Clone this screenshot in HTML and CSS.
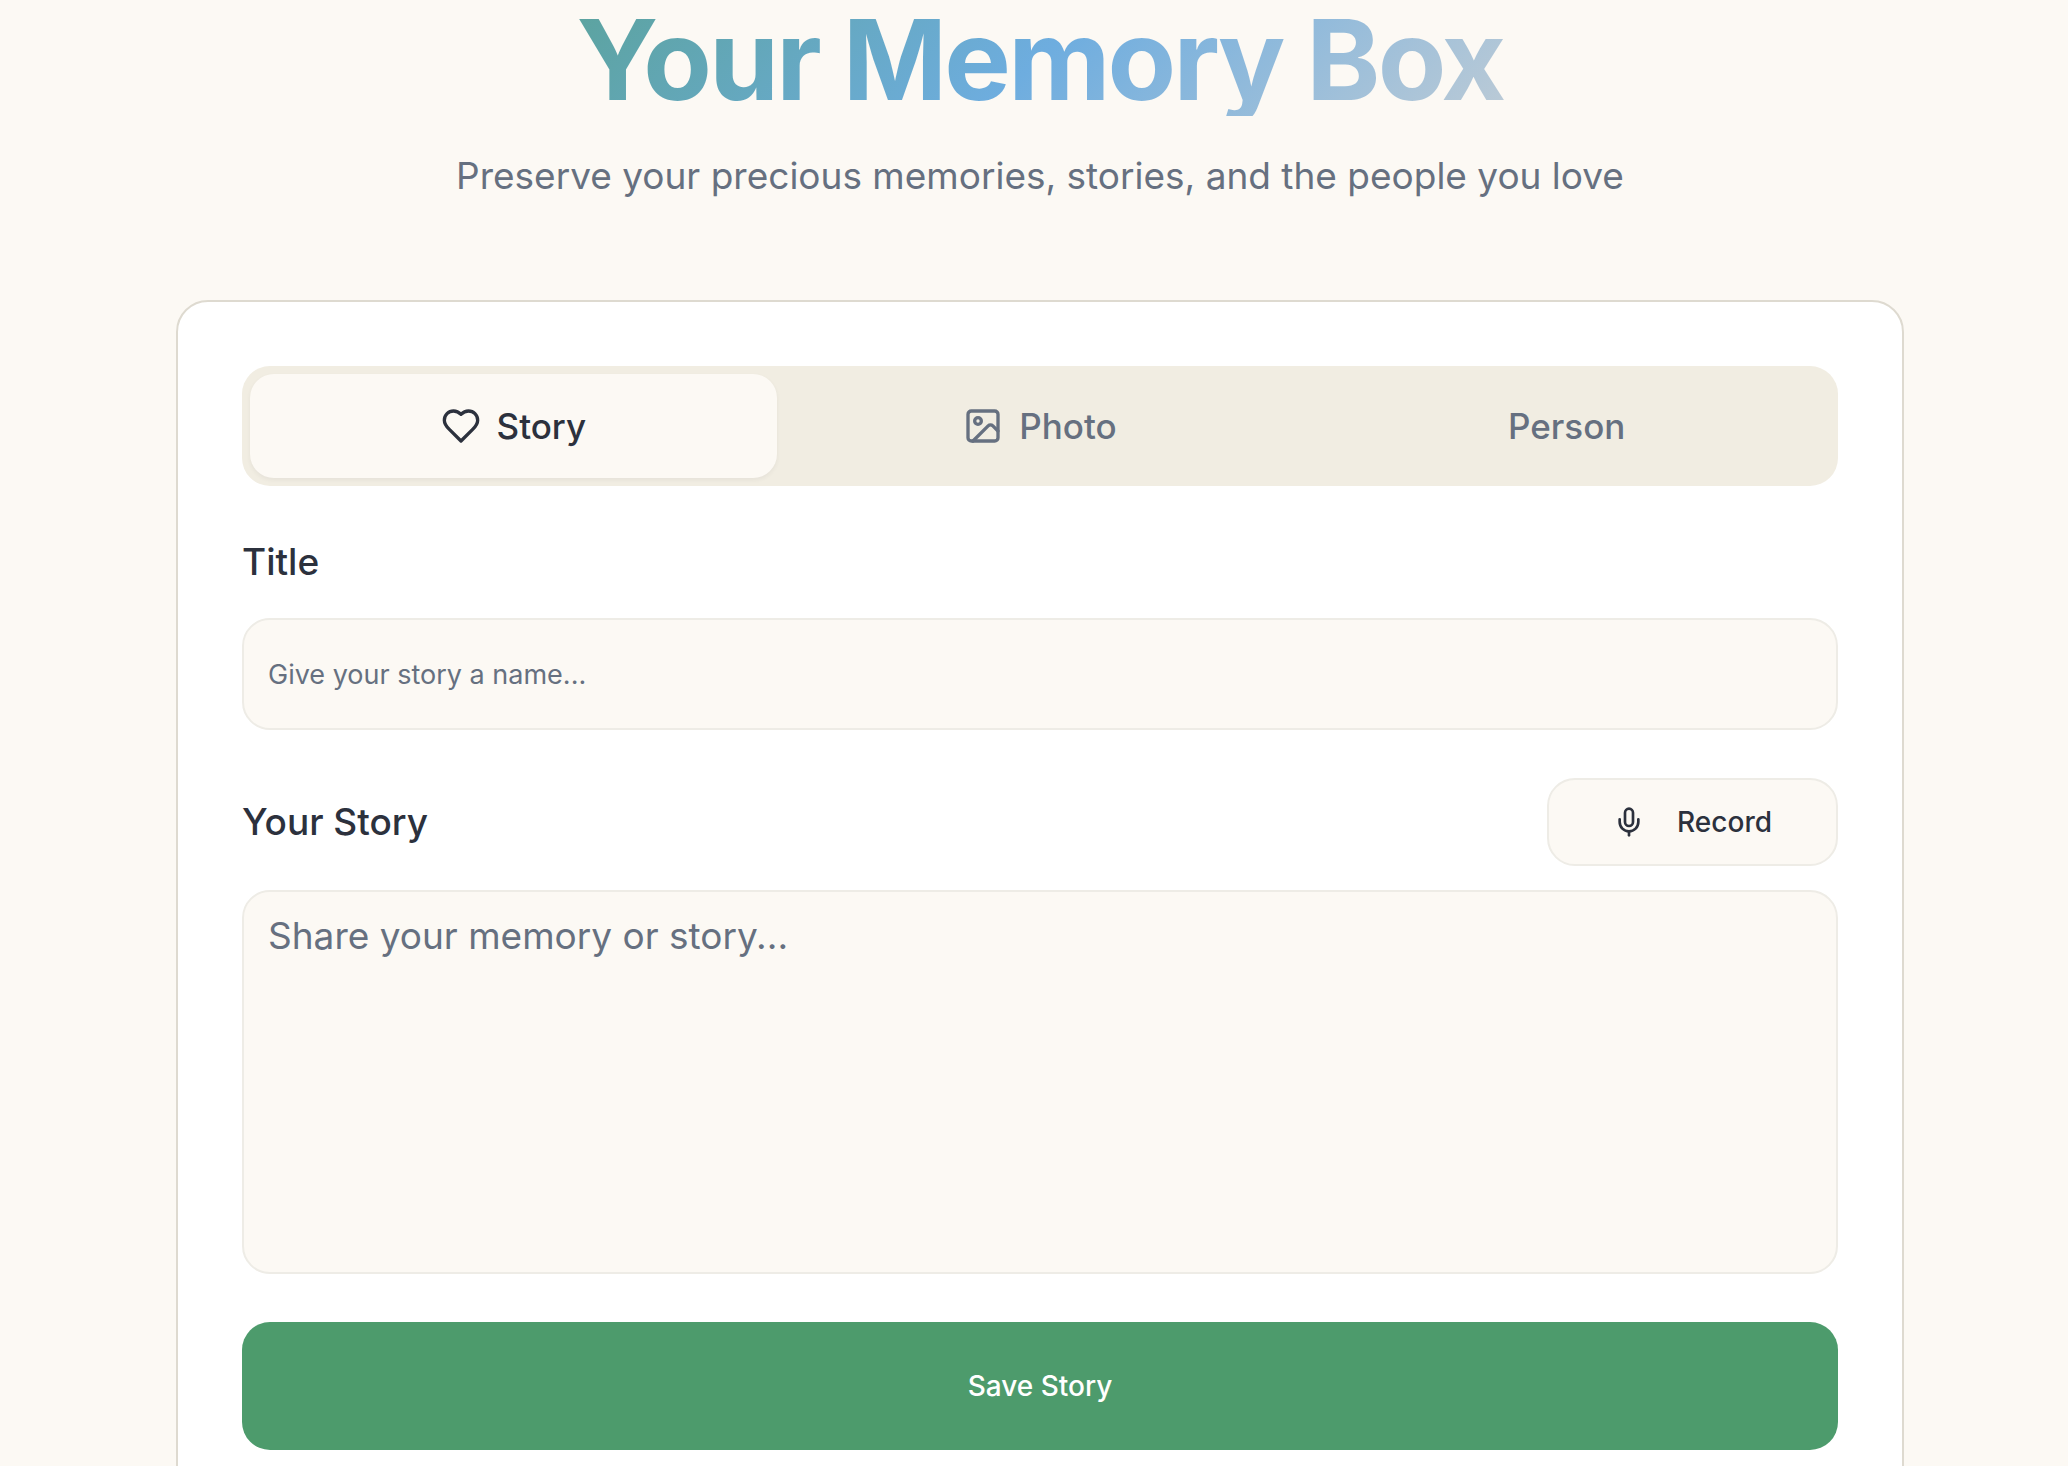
FILE: index.html
```html
<!DOCTYPE html>
<html lang="en">
<head>
<meta charset="utf-8">
<meta name="viewport" content="width=device-width, initial-scale=1">
<title>Your Memory Box</title>
<link rel="stylesheet" href="styles.css">
</head>
<body>
<main class="page">
  <header class="hero">
    <h1 class="hero-title">Your Memory Box</h1>
    <p class="hero-text">Preserve your precious memories, stories, and the people you love</p>
  </header>

  <section class="card">
    <div class="tabs" role="tablist">
      <button class="tab tab-active" type="button" role="tab" aria-selected="true">
        <svg class="icon" viewBox="0 0 24 24" aria-hidden="true"><path d="M19 14c1.49-1.46 3-3.21 3-5.5A5.5 5.5 0 0 0 16.5 3c-1.76 0-3 .5-4.5 2-1.5-1.5-2.74-2-4.5-2A5.5 5.5 0 0 0 2 8.5c0 2.3 1.5 4.05 3 5.5l7 7Z"/></svg>
        Story
      </button>
      <button class="tab" type="button" role="tab" aria-selected="false">
        <svg class="icon" viewBox="0 0 24 24" aria-hidden="true"><rect x="3" y="3" width="18" height="18" rx="2"/><circle cx="9" cy="9" r="2"/><path d="m21 15-3.086-3.086a2 2 0 0 0-2.828 0L6 21"/></svg>
        Photo
      </button>
      <button class="tab" type="button" role="tab" aria-selected="false">Person</button>
    </div>

    <form class="form">
      <div class="field field-title">
        <label class="label" for="title">Title</label>
        <input class="control" id="title" type="text" placeholder="Give your story a name...">
      </div>

      <div class="field">
        <div class="field-head">
          <label class="label" for="story">Your Story</label>
          <button class="record" type="button">
            <svg class="icon icon-small" viewBox="0 0 24 24" aria-hidden="true"><path d="M12 19v3"/><path d="M19 10v2a7 7 0 0 1-14 0v-2"/><rect x="9" y="2" width="6" height="13" rx="3"/></svg>
            Record
          </button>
        </div>
        <textarea class="control control-area" id="story" placeholder="Share your memory or story..."></textarea>
      </div>

      <button class="save" type="submit">Save Story</button>
    </form>
  </section>
</main>
</body>
</html>
```

FILE: styles.css
```css
:root {
  --paper: #fcf9f4;
  --sand: #f1ede2;
  --ink: #2c313d;
  --muted: #667080;
  --green: #4d9b6c;
  --line: #dedad0;
  --line-soft: #eeece6;
  scrollbar-width: none;
}

* {
  box-sizing: border-box;
}

body {
  margin: 0;
  background: var(--paper);
  color: var(--ink);
  font-family: Inter, "Liberation Sans", sans-serif;
}

button,
input,
textarea {
  margin: 0;
  color: inherit;
  font-family: inherit;
}

.page {
  padding: 0 164px 64px 176px;
}

.hero {
  margin-bottom: 96px;
  text-align: center;
}

.hero-title {
  margin: 0 0 32px;
  padding-top: 2px;
  background: linear-gradient(135deg, #4d9b6c, #6eaddf, #f7e1cf);
  background-clip: text;
  -webkit-background-clip: text;
  color: transparent;
  font-size: 112px;
  font-weight: 700;
  line-height: 114px;
  letter-spacing: -0.025em;
}

.hero-text {
  margin: 0;
  color: var(--muted);
  font-size: 37px;
  line-height: 56px;
}

.card {
  padding: 64px;
  border: 2px solid var(--line);
  border-radius: 32px;
  background: #fff;
}

.tabs {
  display: grid;
  grid-template-columns: repeat(3, 1fr);
  margin-bottom: 48px;
  padding: 8px;
  border-radius: 28px;
  background: var(--sand);
}

.tab {
  display: flex;
  align-items: center;
  justify-content: center;
  gap: 16px;
  height: 104px;
  padding: 0;
  border: 0;
  border-radius: 24px;
  background: none;
  color: var(--muted);
  font-size: 35px;
  font-weight: 500;
}

.tab-active {
  background: var(--paper);
  box-shadow: 0 2px 4px rgb(44 49 61 / 6%);
  color: var(--ink);
}

.icon {
  width: 40px;
  height: 40px;
  fill: none;
  stroke: currentColor;
  stroke-width: 2;
  stroke-linecap: round;
  stroke-linejoin: round;
}

.icon-small {
  width: 32px;
  height: 32px;
}

.form {
  display: flex;
  flex-direction: column;
  gap: 48px;
}

.field {
  display: flex;
  flex-direction: column;
  gap: 24px;
}

.field-title {
  gap: 28px;
}

.field-head {
  display: flex;
  align-items: center;
  justify-content: space-between;
}

.label {
  font-size: 37px;
  font-weight: 500;
  line-height: 56px;
}

.control {
  display: block;
  width: 100%;
  height: 112px;
  padding: 16px 24px;
  border: 2px solid var(--line-soft);
  border-radius: 28px;
  background: var(--paper);
  font-size: 27px;
}

.control::placeholder {
  color: var(--muted);
  opacity: 1;
}

.control-area {
  height: 384px;
  font-size: 37px;
  line-height: 56px;
  resize: none;
}

.record {
  display: flex;
  align-items: center;
  gap: 32px;
  height: 88px;
  padding: 0 64px;
  border: 2px solid var(--line-soft);
  border-radius: 28px;
  background: var(--paper);
  font-size: 28px;
  font-weight: 500;
}

.save {
  height: 128px;
  border: 0;
  border-radius: 28px;
  background: var(--green);
  color: #fff;
  font-size: 28px;
  font-weight: 500;
}
```
